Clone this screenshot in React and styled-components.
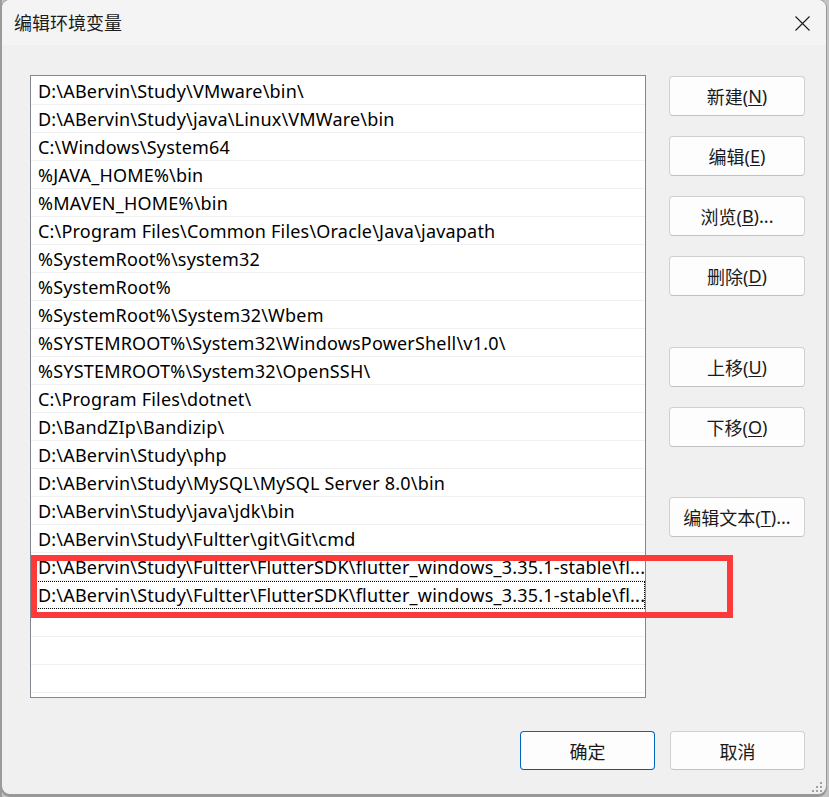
import React from 'react'
import styled, { createGlobalStyle } from 'styled-components'

const GlobalStyle = createGlobalStyle`
  html, body {
    margin: 0;
    padding: 0;
    background: #bdbdbd;
  }
  * {
    box-sizing: border-box;
  }
`;

const FONT = `"Noto Sans", "Noto Sans CJK SC", sans-serif`;

// the last two entries are shown the way the list box cuts them
const paths = [
  'D:\\ABervin\\Study\\VMware\\bin\\',
  'D:\\ABervin\\Study\\java\\Linux\\VMWare\\bin',
  'C:\\Windows\\System64',
  '%JAVA_HOME%\\bin',
  '%MAVEN_HOME%\\bin',
  'C:\\Program Files\\Common Files\\Oracle\\Java\\javapath',
  '%SystemRoot%\\system32',
  '%SystemRoot%',
  '%SystemRoot%\\System32\\Wbem',
  '%SYSTEMROOT%\\System32\\WindowsPowerShell\\v1.0\\',
  '%SYSTEMROOT%\\System32\\OpenSSH\\',
  'C:\\Program Files\\dotnet\\',
  'D:\\BandZIp\\Bandizip\\',
  'D:\\ABervin\\Study\\php',
  'D:\\ABervin\\Study\\MySQL\\MySQL Server 8.0\\bin',
  'D:\\ABervin\\Study\\java\\jdk\\bin',
  'D:\\ABervin\\Study\\Fultter\\git\\Git\\cmd',
  'D:\\ABervin\\Study\\Fultter\\FlutterSDK\\flutter_windows_3.35.1-stable\\fl...',
  'D:\\ABervin\\Study\\Fultter\\FlutterSDK\\flutter_windows_3.35.1-stable\\fl...',
];

const sideButtons = [
  { label: '新建', key: 'N', gap: 1 },
  { label: '编辑', key: 'E', gap: 20 },
  { label: '浏览', key: 'B', gap: 20, dots: true },
  { label: '删除', key: 'D', gap: 20 },
  { label: '上移', key: 'U', gap: 51 },
  { label: '下移', key: 'O', gap: 20 },
  { label: '编辑文本', key: 'T', gap: 50, dots: true },
];

const Page = styled.div`
  width: 829px;
  height: 797px;
  padding-left: 2px;
  background: linear-gradient(to right, #9c9c9c 0 2px, #c4c4c4 2px);
  overflow: hidden;
`;

const Window = styled.div`
  position: relative;
  width: 824px;
  height: 794px;
  background: #f0f0f0;
  border-radius: 8px;
  box-shadow: 0 0 0 1px #9a9a9a, 0 2px 0 1px #979797;
  display: flex;
  flex-direction: column;
  font-family: ${FONT};
  color: #000;
  overflow: hidden;
`;

const TitleBar = styled.div`
  height: 45px;
  flex: none;
  background: #f4f4f4;
  display: flex;
  align-items: center;
  justify-content: space-between;
  padding: 0 16px 0 12px;
`;

const Title = styled.div`
  font-size: 18px;
  color: #1b1b1b;
  margin-top: -2px;
`;

const CloseButton = styled.div`
  width: 15px;
  height: 15px;
  display: flex;
  margin-top: 1px;
`;

const Body = styled.div`
  flex: 1;
  display: flex;
  flex-direction: column;
  padding: 30px 21px 24px 28px;
`;

const Main = styled.div`
  display: flex;
  gap: 23px;
`;

const ListBox = styled.div`
  width: 616px;
  height: 623px;
  border: 1px solid #828790;
  background: #fff;
  padding-top: 1px;
  overflow: hidden;
`;

const Row = styled.div`
  height: 28px;
  border-bottom: 1px solid #f0f0f0;
  padding: 0 1px 0 7px;
  font-size: 18px;
  letter-spacing: 0.2px;
  line-height: 29px;
  white-space: nowrap;
  overflow: hidden;
  outline: ${p => (p.$focused ? '1px dotted #000' : 'none')};
  outline-offset: -1px;
`;

const ButtonColumn = styled.div`
  width: 136px;
  display: flex;
  flex-direction: column;
`;

const Button = styled.button`
  width: ${p => p.$w || 136}px;
  height: ${p => p.$h || 40}px;
  margin-top: ${p => p.$gap || 0}px;
  background: #fdfdfd;
  border: 1px solid ${p => (p.$primary ? '#0067c0' : '#d0d0d0')};
  border-bottom-color: ${p => (p.$primary ? '#0058a8' : '#c2c2c2')};
  border-radius: 4px;
  font-family: ${FONT};
  font-size: 18px;
  color: #1a1a1a;
  padding: 0;
  display: flex;
  align-items: center;
  justify-content: center;

  u {
    text-underline-offset: 2px;
  }
`;

const Footer = styled.div`
  margin-top: 33px;
  display: flex;
  justify-content: flex-end;
  gap: 15px;
`;

const Highlight = styled.div`
  position: absolute;
  left: 29px;
  top: 555px;
  width: 702px;
  height: 63px;
  border: 6px solid #fd3a3a;
  pointer-events: none;
`;

const Grip = styled.svg`
  position: absolute;
  right: 3px;
  bottom: 1px;
`;

function CloseIcon() {
  return (
    <svg width="15" height="15" viewBox="0 0 15 15">
      <path d="M0.5 0.5 L14.5 14.5 M14.5 0.5 L0.5 14.5" stroke="#1a1a1a" strokeWidth="1.1" fill="none" />
    </svg>
  );
}

function App() {
  const rows = [...paths];
  while (rows.length < 23) rows.push('');

  return (
    <Page>
      <GlobalStyle />
      <Window>
        <TitleBar>
          <Title>编辑环境变量</Title>
          <CloseButton>
            <CloseIcon />
          </CloseButton>
        </TitleBar>
        <Body>
          <Main>
            <ListBox>
              {rows.map((p, i) => (
                <Row key={i} $focused={i === paths.length - 1}>{p}</Row>
              ))}
            </ListBox>
            <ButtonColumn>
              {sideButtons.map(b => (
                <Button key={b.key} $gap={b.gap}>
                  {b.label}(<u>{b.key}</u>){b.dots ? '...' : ''}
                </Button>
              ))}
            </ButtonColumn>
          </Main>
          <Footer>
            <Button $primary $w={135} $h={39}>确定</Button>
            <Button $w={135} $h={39}>取消</Button>
          </Footer>
        </Body>
        <Highlight />
        <Grip width="12" height="12" viewBox="0 0 12 12">
          <rect x="9" y="1" width="2" height="2" fill="#a0a0a0" />
          <rect x="5" y="5" width="2" height="2" fill="#a0a0a0" />
          <rect x="9" y="5" width="2" height="2" fill="#a0a0a0" />
          <rect x="1" y="9" width="2" height="2" fill="#a0a0a0" />
          <rect x="5" y="9" width="2" height="2" fill="#a0a0a0" />
          <rect x="9" y="9" width="2" height="2" fill="#a0a0a0" />
        </Grip>
      </Window>
    </Page>
  );
}

export default App
